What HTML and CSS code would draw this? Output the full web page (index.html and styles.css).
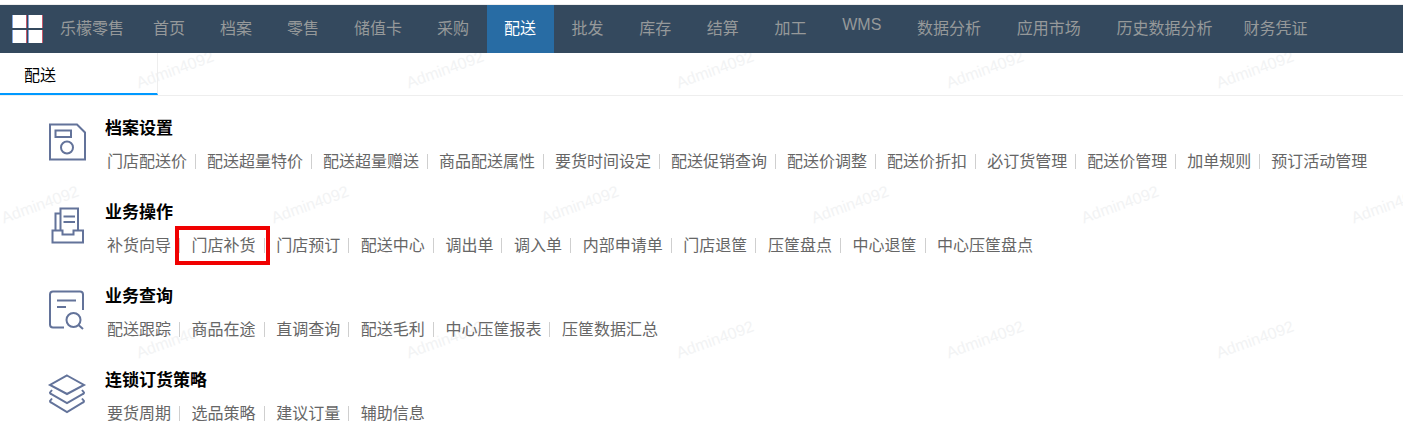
FILE: index.html
```html
<!DOCTYPE html>
<html lang="zh-CN">
<head>
<meta charset="utf-8">
<title>配送</title>
<link rel="stylesheet" href="styles.css">
</head>
<body>
<div class="page">
  <header class="topbar">
    <div class="logo"><i></i><i></i><i></i><i></i></div>
    <div class="brand">乐檬零售</div>
    <nav class="nav">
      <a>首页</a><a>档案</a><a>零售</a><a>储值卡</a><a>采购</a><a class="active">配送</a><a>批发</a><a>库存</a><a>结算</a><a>加工</a><a class="wms">WMS</a><a>数据分析</a><a>应用市场</a><a>历史数据分析</a><a>财务凭证</a>
    </nav>
  </header>
  <div class="tabs"><div class="tab">配送</div></div>
  <main class="content">
    <section class="group">
      <svg class="icon" viewBox="0 0 48 48"><path d="M6 6.500H33L41 14.500V41.500H6Z"/><rect x="11.500" y="12.500" width="15.500" height="6.500"/><circle cx="23" cy="29.500" r="6"/></svg>
      <div class="body">
        <h2>档案设置</h2>
        <ul class="links"><li>门店配送价</li><li>配送超量特价</li><li>配送超量赠送</li><li>商品配送属性</li><li>要货时间设定</li><li>配送促销查询</li><li>配送价调整</li><li>配送价折扣</li><li>必订货管理</li><li>配送价管理</li><li>加单规则</li><li class="last">预订活动管理</li></ul>
      </div>
    </section>
    <section class="group">
      <svg class="icon" viewBox="0 0 48 48"><path d="M8.500 28.500H18.500V32.500H29.500V28.500H39V40.500H8.500Z"/><path d="M16.500 28.500V6.500H34V28.500"/><path d="M16.500 11.500H11.500V28.500"/><path d="M19.500 14.500H31M19.500 20H31"/></svg>
      <div class="body">
        <h2>业务操作</h2>
        <ul class="links"><li>补货向导</li><li class="marked">门店补货</li><li>门店预订</li><li>配送中心</li><li>调出单</li><li>调入单</li><li>内部申请单</li><li>门店退筐</li><li>压筐盘点</li><li>中心退筐</li><li class="last">中心压筐盘点</li></ul>
      </div>
    </section>
    <section class="group">
      <svg class="icon" viewBox="0 0 48 48"><path d="M20 41.500H9Q6 41.500 6 38.500V8.500Q6 5.500 9 5.500H36Q39 5.500 39 8.500V24"/><path d="M13 14.500H32M13 21H22"/><circle cx="29.500" cy="34" r="7"/><path d="M34.500 39L39 43"/></svg>
      <div class="body">
        <h2>业务查询</h2>
        <ul class="links"><li>配送跟踪</li><li>商品在途</li><li>直调查询</li><li>配送毛利</li><li>中心压筐报表</li><li class="last">压筐数据汇总</li></ul>
      </div>
    </section>
    <section class="group">
      <svg class="icon" viewBox="0 0 48 48"><path d="M23 5.500L40 15L23 24L6 15Z"/><path d="M8 20L6 22.500Q6 23.500 7 24L23 33L39 24Q40 23.500 40 22.500L38 20"/><path d="M8 28.500L6 31Q6 32 7 32.500L23 42L39 32.500Q40 32 40 31L38 28.500"/></svg>
      <div class="body">
        <h2>连锁订货策略</h2>
        <ul class="links"><li>要货周期</li><li>选品策略</li><li>建议订量</li><li class="last">辅助信息</li></ul>
      </div>
    </section>
  </main>
  <div class="watermarks" aria-hidden="true">
    <div class="wm-row wm-a"><span>Admin4092</span><span>Admin4092</span><span>Admin4092</span><span>Admin4092</span><span>Admin4092</span></div>
    <div class="wm-row wm-b"><span>Admin4092</span><span>Admin4092</span><span>Admin4092</span><span>Admin4092</span><span>Admin4092</span><span>Admin4092</span></div>
    <div class="wm-row wm-a"><span>Admin4092</span><span>Admin4092</span><span>Admin4092</span><span>Admin4092</span><span>Admin4092</span></div>
  </div>
</div>
</body>
</html>
```
FILE: styles.css
```css
* { box-sizing: border-box; }
html, body { margin: 0; padding: 0; background: #fff; }
body { font-family: "Liberation Sans", "Noto Sans CJK SC", sans-serif; font-size: 16px; }
.page { position: relative; width: 1403px; height: 434px; overflow: hidden; }

.topbar {
  position: relative;
  z-index: 2;
  display: flex;
  align-items: center;
  height: 48px;
  margin-top: 5px;
  background: #34495e;
  color: #96999a;
  box-shadow: 0 -1px 0 #eeeeee;
}
.logo {
  display: grid;
  grid-template-columns: 15px 15px;
  grid-template-rows: 13px 13px;
  gap: 2px 1px;
  margin-left: 12px;
}
.logo i { background: #fff; border-left: 1px solid #7fa6e0; border-right: 1px solid #c8586a; }
.brand { margin-left: 17px; width: 75.500px; line-height: 48px; }
.nav { display: flex; height: 48px; }
.nav a { display: block; padding: 0 17.500px; line-height: 48px; white-space: nowrap; }
.nav a.active { background: #286ca4; color: #fff; }
.nav a.active ~ a { padding: 0 17.850px; }
.nav a.active ~ a:nth-last-child(2) { padding-right: 13.300px; }
.nav a.wms { line-height: 40px; }

.tabs { position: relative; z-index: 2; height: 43px; border-bottom: 1px solid #eeeeee; }
.tab {
  width: 158px;
  height: 42px;
  padding: 11px 0 0 24px;
  line-height: 24px;
  color: #000;
  border-right: 1px solid #eeeeee;
  border-bottom: 2px solid #0099ff;
}

.content { position: relative; z-index: 2; padding: 19px 0 0 44px; }
.group { display: flex; height: 84px; }
.icon {
  flex: none;
  width: 48px;
  height: 48px;
  margin-top: 3px;
  fill: none;
  stroke: #63739a;
  stroke-width: 2;
}
.body { margin-left: 13px; }
h2 { margin: 0; font-size: 17px; line-height: 28px; font-weight: 700; color: #000; }
.links { display: flex; margin: 7px 0 0 2px; padding: 0; list-style: none; line-height: 24px; color: #666666; white-space: nowrap; }
.links li { position: relative; margin-right: 11px; padding-right: 9px; }
.group + .group .links li { margin-right: 11.600px; }
.links li::after {
  content: "";
  position: absolute;
  right: 0;
  top: 4px;
  width: 1px;
  height: 15px;
  background: #cfcfcf;
}
.links li.last::after { display: none; }
.links li.marked::before {
  content: "";
  position: absolute;
  left: -17px;
  right: -5px;
  top: -8px;
  bottom: -7px;
  border: 4px solid #f00000;
}

.watermarks { position: absolute; left: 0; top: 2px; width: 100%; z-index: 1; pointer-events: none; }
.wm-row { display: flex; height: 135px; }
.wm-a { margin-left: 40px; }
.wm-b { margin-left: -95px; }
.wm-row span {
  flex: none;
  width: 270px;
  line-height: 135px;
  text-align: center;
  color: #f2f3f4;
  transform: rotate(-20deg);
}
```
